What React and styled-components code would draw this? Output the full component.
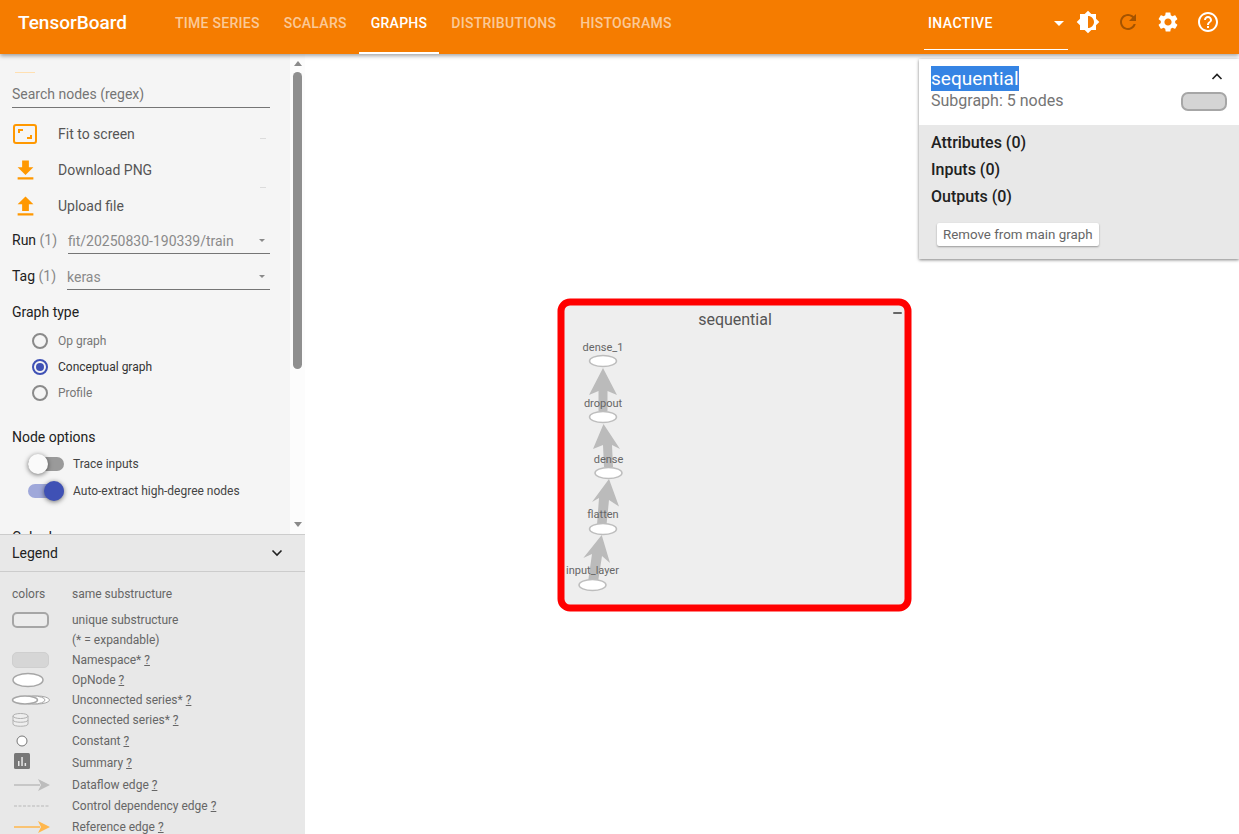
import React from 'react'
import styled, { createGlobalStyle } from 'styled-components'

const GlobalStyle = createGlobalStyle`
html, body {
  margin: 0;
  height: 100%;
  overflow: hidden;
  background: #fff;
  font-family: Roboto, "Noto Sans", sans-serif;
}
#root { height: 100%; }
* { box-sizing: border-box; }
`

const Page = styled.div`
  display: flex;
  flex-direction: column;
  height: 834px;
`

/* ---------- toolbar ---------- */

const Toolbar = styled.header`
  display: flex;
  align-items: stretch;
  flex: 0 0 54px;
  height: 54px;
  background: #f57c00;
  color: #fff;
  position: relative;
  z-index: 3;
  box-shadow: 0 2px 4px rgba(0, 0, 0, 0.35);
`

const Brand = styled.div`
  width: 163px;
  padding: 11px 0 0 18px;
  font-size: 19px;
  font-weight: 500;
  line-height: 24px;
`

const Tabs = styled.nav`
  display: flex;
  flex: 1;
`

const Tab = styled.div`
  padding: 15px 12px 0;
  height: 54px;
  font-size: 14px;
  font-weight: 500;
  line-height: 16px;
  letter-spacing: 0.27px;
  color: ${p => (p.$active ? '#fff' : 'rgba(255, 255, 255, 0.6)')};
  border-bottom: 2px solid ${p => (p.$active ? '#fff' : 'transparent')};
`

const InactiveSelect = styled.div`
  display: flex;
  justify-content: space-between;
  width: 144px;
  height: 50px;
  padding: 15px 4px 0 4px;
  font-size: 14px;
  font-weight: 500;
  line-height: 16px;
  letter-spacing: 0.4px;
  border-bottom: 1px solid #fff;
`

const Caret = styled.span`
  width: 0;
  height: 0;
  margin-top: 6px;
  border-left: ${p => p.$size || 5}px solid transparent;
  border-right: ${p => p.$size || 5}px solid transparent;
  border-top: ${p => p.$size || 5}px solid ${p => p.$color || '#fff'};
`

const ToolIcons = styled.div`
  display: flex;
  gap: 16px;
  padding: 10px 19px 0 8px;
`

const ToolIcon = styled.svg`
  width: 24px;
  height: 24px;
  fill: ${p => (p.$dim ? 'rgba(0, 0, 0, 0.33)' : '#fff')};
`

/* ---------- body ---------- */

const Body = styled.div`
  display: flex;
  flex: 1;
  min-height: 0;
`

const Side = styled.aside`
  display: flex;
  flex-direction: column;
  flex: 0 0 305px;
  width: 305px;
  min-height: 0;
`

const Controls = styled.div`
  display: flex;
  flex: 0 0 480px;
  height: 480px;
  overflow: hidden;
`

const ControlsInner = styled.div`
  flex: 0 0 290px;
  height: 480px;
  overflow: hidden;
  padding: 18px 20px 0 12px;
  background: #f5f5f5;
`

const Scrollbar = styled.div`
  display: flex;
  flex-direction: column;
  align-items: center;
  flex: 1;
  background: #fcfcfc;
  padding-top: 7px;
`

const ScrollUp = styled.span`
  width: 0;
  height: 0;
  border-left: 4px solid transparent;
  border-right: 4px solid transparent;
  border-bottom: 5px solid #8a8a8a;
`

const ScrollDown = styled.span`
  width: 0;
  height: 0;
  margin-top: 153px;
  border-left: 4px solid transparent;
  border-right: 4px solid transparent;
  border-top: 5px solid #8a8a8a;
`

const ScrollThumb = styled.div`
  width: 9px;
  height: 297px;
  margin-top: 6px;
  border-radius: 5px;
  background: #8f8f8f;
`

const FaintLine = styled.div`
  width: 20px;
  margin-left: 3px;
  height: 1px;
  background: #ffe0b2;
`

const Search = styled.div`
  height: 35px;
  margin-bottom: 8px;
  padding-top: 13px;
  font-size: 14px;
  line-height: 16px;
  color: #757575;
  border-bottom: 1px solid #757575;
`

const Action = styled.div`
  display: flex;
  align-items: center;
  height: 36px;
  font-size: 14px;
  color: #555;
`

const ActionIconBox = styled.div`
  display: flex;
  justify-content: center;
  width: 26px;
  margin-right: 20px;
`

const ActionIcon = styled.svg`
  width: 27px;
  height: 27px;
  flex: none;
  fill: #ff9800;
`

const ActionDash = styled.span`
  width: 6px;
  height: 1px;
  margin-left: auto;
  margin-right: 4px;
  margin-top: ${p => (p.$end ? '0' : '8px')};
  align-self: ${p => (p.$end ? 'flex-end' : 'center')};
  background: #dcdcdc;
`

const SelectRow = styled.div`
  display: flex;
  align-items: flex-start;
  height: 36px;
  font-size: 14px;
  line-height: 16px;
  margin-top: ${p => p.$top || 0}px;
`

const SelectLabel = styled.div`
  padding-top: 9px;
  color: #212121;
  width: ${p => p.$width}px;
  flex: none;
`

const Count = styled.span`
  color: #888;
`

const SelectBox = styled.div`
  display: flex;
  justify-content: space-between;
  flex: 1;
  height: 31px;
  padding: 10px 5px 0 0;
  color: #8a8a8a;
  border-bottom: 1px solid #757575;
`

const SectionTitle = styled.div`
  font-size: 14px;
  line-height: 16px;
  color: #212121;
  margin-top: ${p => p.$top}px;
`

const RadioList = styled.div`
  display: flex;
  flex-direction: column;
  padding: 8px 0 0 20px;
`

const RadioRow = styled.div`
  display: flex;
  align-items: center;
  height: 26px;
  font-size: 12px;
  color: ${p => (p.$on ? '#333' : '#777')};
`

const RadioDot = styled.span`
  position: relative;
  width: 16px;
  height: 16px;
  margin-right: 10px;
  border-radius: 50%;
  border: 2px solid ${p => (p.$on ? '#3f51b5' : '#8a8a8a')};

  &::after {
    content: '';
    display: ${p => (p.$on ? 'block' : 'none')};
    position: absolute;
    inset: 2px;
    border-radius: 50%;
    background: #3f51b5;
  }
`

const ToggleList = styled.div`
  display: flex;
  flex-direction: column;
  padding: 5px 0 0 16px;
`

const ToggleRow = styled.div`
  display: flex;
  align-items: center;
  height: 27px;
  font-size: 12px;
  color: #444;
`

const Toggle = styled.span`
  position: relative;
  width: 36px;
  height: 14px;
  margin-right: 9px;
  border-radius: 7px;
  background: ${p => (p.$on ? '#9fa8da' : '#9a9a9a')};

  &::after {
    content: '';
    position: absolute;
    top: -3px;
    left: ${p => (p.$on ? '16px' : '0')};
    width: 20px;
    height: 20px;
    border-radius: 50%;
    background: ${p => (p.$on ? '#3f51b5' : '#fafafa')};
    box-shadow: 0 1px 5px rgba(0, 0, 0, 0.55);
  }
`

/* ---------- legend ---------- */

const Legend = styled.section`
  flex: 1;
  overflow: hidden;
  background: #e8e8e8;
`

const LegendHead = styled.div`
  display: flex;
  align-items: center;
  justify-content: space-between;
  height: 38px;
  padding: 0 20px 0 12px;
  font-size: 14px;
  color: #212121;
  border-top: 1px solid #ccc;
  border-bottom: 1px solid #ccc;
`

const Chevron = styled.svg`
  width: 16px;
  height: 16px;
  fill: none;
  stroke: #212121;
  stroke-width: 1.6;
`

const LegendRows = styled.div`
  padding-top: 12px;
  font-size: 12px;
  color: #666;
`

const LegendRow = styled.div`
  display: flex;
  align-items: center;
  height: 20px;
  margin-top: ${p => p.$gap || 0}px;
  padding-left: 12px;
`

const LegendKey = styled.div`
  display: flex;
  align-items: center;
  width: 60px;
  flex: none;
`

const Help = styled.span`
  text-decoration: underline;
`

const UniqueBox = styled.span`
  width: 37px;
  height: 16px;
  border-radius: 5px;
  border: 2px solid #a6a6a6;
  background: #ececec;
`

const NamespaceBox = styled.span`
  width: 37px;
  height: 16px;
  border-radius: 5px;
  border: 1px solid #cfcfcf;
  background: #d6d6d6;
`

const KeySvg = styled.svg`
  display: block;
  overflow: visible;
  margin-top: ${p => p.$lift || 0}px;
`

/* ---------- main canvas ---------- */

const Canvas = styled.main`
  flex: 1;
  position: relative;
  background: #fff;
`

const GraphSvg = styled.svg`
  position: absolute;
  left: 252px;
  top: 244px;
  font-family: Roboto, sans-serif;
`

const InfoCard = styled.div`
  position: absolute;
  top: 5px;
  right: 0;
  width: 320px;
  height: 200px;
  box-shadow: 0 1px 3px rgba(0, 0, 0, 0.5);
`

const InfoHead = styled.div`
  position: relative;
  height: 66px;
  padding: 8px 12px 0;
  background: #fff;
`

const NodeName = styled.div`
  font-size: 19px;
  line-height: 24px;
`

const Selected = styled.span`
  padding: 1px 0;
  background: #3584e4;
  color: #fff;
`

const NodeSub = styled.div`
  font-size: 16px;
  line-height: 20px;
  color: #757575;
`

const CollapseBtn = styled(Chevron)`
  position: absolute;
  top: 10px;
  right: 14px;
`

const NodePill = styled.span`
  position: absolute;
  top: 33px;
  right: 12px;
  width: 46px;
  height: 19px;
  border-radius: 7px;
  border: 2px solid #a6a6a6;
  background: #d4d4d4;
`

const InfoBody = styled.div`
  height: 134px;
  padding: 4px 12px 0;
  background: #e8e8e8;
`

const InfoLine = styled.div`
  height: 27px;
  font-size: 16px;
  font-weight: 500;
  line-height: 27px;
  color: #212121;
`

const RemoveBtn = styled.div`
  display: inline-block;
  height: 23px;
  margin: 13px 0 0 6px;
  padding: 0 6px;
  font-size: 13.33px;
  line-height: 23px;
  color: #666;
  background: #fff;
  border-radius: 2px;
  box-shadow: 0 1px 2px rgba(0, 0, 0, 0.35);
`

const nodes = [
  { name: 'dense_1', x: 46, y: 63, ly: 53 },
  { name: 'dropout', x: 46, y: 119, ly: 109 },
  { name: 'dense', x: 51.5, y: 175, ly: 164.5 },
  { name: 'flatten', x: 46, y: 231, ly: 220 },
  { name: 'input_layer', x: 35.5, y: 287, ly: 276 },
]

const arrows = [
  'M46 70 L60 97 L50.5 93 L50.5 113 L41.5 113 L41.5 93 L32 97 Z',
  'M46.5 126 L63 151 L55 147 L56 169 L47 169 L46 147 L36 151 Z',
  'M52 181 L62 208.5 L52 202 L49.5 227 L40 227 L42 200 L35 204 Z',
  'M44.7 237 L53 265 L45 258 L41 284 L31 284 L35 256 L26.3 260 Z',
]

const ArrowIcon = ({ color, dashed }) => (
  <KeySvg width="38" height="14" viewBox="0 0 38 14">
    {dashed
      ? <path d="M2 7 H38" stroke={color} strokeWidth="1" strokeDasharray="3 1.5" fill="none" />
      : <path d="M2 7 H28" stroke={color} strokeWidth="1.5" fill="none" />}
    {!dashed && <path d="M26 1 L38 7 L26 13 L29 7 Z" fill={color} />}
  </KeySvg>
)

function App() {
  return (
    <Page>
      <GlobalStyle />
      <Toolbar>
        <Brand>TensorBoard</Brand>
        <Tabs>
          <Tab>TIME SERIES</Tab>
          <Tab>SCALARS</Tab>
          <Tab $active>GRAPHS</Tab>
          <Tab>DISTRIBUTIONS</Tab>
          <Tab>HISTOGRAMS</Tab>
        </Tabs>
        <InactiveSelect>
          INACTIVE
          <Caret />
        </InactiveSelect>
        <ToolIcons>
          <ToolIcon viewBox="0 0 24 24"><path d="M20 15.31L23.31 12 20 8.69V4h-4.69L12 .69 8.69 4H4v4.69L.69 12 4 15.31V20h4.69L12 23.31 15.31 20H20v-4.69zM12 18V6c3.31 0 6 2.69 6 6s-2.69 6-6 6z" /></ToolIcon>
          <ToolIcon $dim viewBox="0 0 24 24"><path d="M17.65 6.35C16.2 4.9 14.21 4 12 4c-4.42 0-7.99 3.58-7.99 8s3.57 8 7.99 8c3.73 0 6.84-2.55 7.73-6h-2.08c-.82 2.33-3.04 4-5.65 4-3.31 0-6-2.69-6-6s2.69-6 6-6c1.66 0 3.14.69 4.22 1.78L13 11h7V4l-2.35 2.35z" /></ToolIcon>
          <ToolIcon viewBox="0 0 24 24"><path d="M19.14 12.94c.04-.3.06-.61.06-.94 0-.32-.02-.64-.07-.94l2.03-1.58c.18-.14.23-.41.12-.61l-1.92-3.32c-.12-.22-.37-.29-.59-.22l-2.39.96c-.5-.38-1.03-.7-1.62-.94l-.36-2.54c-.04-.24-.24-.41-.48-.41h-3.84c-.24 0-.43.17-.47.41l-.36 2.54c-.59.24-1.13.57-1.62.94l-2.39-.96c-.22-.08-.47 0-.59.22L2.74 8.87c-.12.21-.08.47.12.61l2.03 1.58c-.05.3-.09.63-.09.94s.02.64.07.94l-2.03 1.58c-.18.14-.23.41-.12.61l1.92 3.32c.12.22.37.29.59.22l2.39-.96c.5.38 1.03.7 1.62.94l.36 2.54c.05.24.24.41.48.41h3.84c.24 0 .44-.17.47-.41l.36-2.54c.59-.24 1.13-.56 1.62-.94l2.39.96c.22.08.47 0 .59-.22l1.92-3.32c.12-.22.07-.47-.12-.61l-2.01-1.58zM12 15.6c-1.98 0-3.6-1.62-3.6-3.6s1.62-3.6 3.6-3.6 3.6 1.62 3.6 3.6-1.62 3.6-3.6 3.6z" /></ToolIcon>
          <ToolIcon viewBox="0 0 24 24"><path d="M11 18h2v-2h-2v2zm1-16C6.48 2 2 6.48 2 12s4.48 10 10 10 10-4.48 10-10S17.52 2 12 2zm0 18c-4.41 0-8-3.59-8-8s3.59-8 8-8 8 3.59 8 8-3.59 8-8 8zm0-14c-2.21 0-4 1.79-4 4h2c0-1.1.9-2 2-2s2 .9 2 2c0 2-3 1.75-3 5h2c0-2.25 3-2.5 3-5 0-2.21-1.79-4-4-4z" /></ToolIcon>
        </ToolIcons>
      </Toolbar>

      <Body>
        <Side>
          <Controls>
            <ControlsInner>
              <FaintLine />
              <Search>Search nodes (regex)</Search>
              <Action>
                <ActionIconBox>
                  <KeySvg width="24" height="20" viewBox="0 0 24 20">
                    <rect x="1" y="1" width="22" height="18" rx="2" fill="none" stroke="#ff9800" strokeWidth="2" />
                    <path d="M5 9 V5 H10 V7 H7 V9 Z M19 11 V15 H14 V13 H17 V11 Z" fill="#ff9800" />
                  </KeySvg>
                </ActionIconBox>
                Fit to screen
                <ActionDash />
              </Action>
              <Action>
                <ActionIconBox>
                  <ActionIcon viewBox="0 0 24 24"><path d="M19 9h-4V3H9v6H5l7 7 7-7zM5 18v2h14v-2H5z" /></ActionIcon>
                </ActionIconBox>
                Download PNG
                <ActionDash $end />
              </Action>
              <Action>
                <ActionIconBox>
                  <ActionIcon viewBox="0 0 24 24"><path d="M5 20h14v-2H5v2zm0-10h4v6h6v-6h4l-7-7-7 7z" /></ActionIcon>
                </ActionIconBox>
                Upload file
              </Action>
              <SelectRow $top={-1}>
                <SelectLabel $width={56}>Run <Count>(1)</Count></SelectLabel>
                <SelectBox>fit/20250830-190339/train<Caret $size={3} $color="#8a8a8a" /></SelectBox>
              </SelectRow>
              <SelectRow>
                <SelectLabel $width={55}>Tag <Count>(1)</Count></SelectLabel>
                <SelectBox>keras<Caret $size={3} $color="#8a8a8a" /></SelectBox>
              </SelectRow>
              <SectionTitle $top={9}>Graph type</SectionTitle>
              <RadioList>
                <RadioRow><RadioDot />Op graph</RadioRow>
                <RadioRow $on><RadioDot $on />Conceptual graph</RadioRow>
                <RadioRow><RadioDot />Profile</RadioRow>
              </RadioList>
              <SectionTitle $top={23}>Node options</SectionTitle>
              <ToggleList>
                <ToggleRow><Toggle />Trace inputs</ToggleRow>
                <ToggleRow><Toggle $on />Auto-extract high-degree nodes</ToggleRow>
              </ToggleList>
              <SectionTitle $top={25}>Color by</SectionTitle>
            </ControlsInner>
            <Scrollbar>
              <ScrollUp />
              <ScrollThumb />
              <ScrollDown />
            </Scrollbar>
          </Controls>

          <Legend>
            <LegendHead>
              Legend
              <Chevron viewBox="0 0 16 16"><path d="M3.5 5.5 L8 10 L12.5 5.5" /></Chevron>
            </LegendHead>
            <LegendRows>
              <LegendRow><LegendKey>colors</LegendKey>same substructure</LegendRow>
              <LegendRow $gap={6}><LegendKey><UniqueBox /></LegendKey>unique substructure</LegendRow>
              <LegendRow><LegendKey />(* = expandable)</LegendRow>
              <LegendRow><LegendKey><NamespaceBox /></LegendKey><span>Namespace* <Help>?</Help></span></LegendRow>
              <LegendRow><LegendKey>
                <KeySvg width="32" height="15" viewBox="0 0 32 15"><ellipse cx="16" cy="7" rx="15" ry="6.5" fill="#fff" stroke="#a6a6a6" strokeWidth="1.5" /></KeySvg>
              </LegendKey><span>OpNode <Help>?</Help></span></LegendRow>
              <LegendRow><LegendKey>
                <KeySvg width="38" height="12" viewBox="0 0 38 12">
                  <ellipse cx="25" cy="6" rx="12.5" ry="4" fill="#fff" stroke="#a6a6a6" />
                  <ellipse cx="21" cy="6" rx="12" ry="4" fill="#fff" stroke="#a6a6a6" />
                  <ellipse cx="13" cy="6" rx="12.5" ry="4" fill="#fff" stroke="#a6a6a6" strokeWidth="1.5" />
                </KeySvg>
              </LegendKey><span>Unconnected series* <Help>?</Help></span></LegendRow>
              <LegendRow><LegendKey>
                <KeySvg width="17" height="14" viewBox="0 0 17 14">
                  <path d="M1 3 V11 C1 14 16 14 16 11 V3" fill="#eee" stroke="#b0b0b0" />
                  <path d="M1 7 C1 10 16 10 16 7" fill="none" stroke="#b0b0b0" />
                  <ellipse cx="8.5" cy="3" rx="7.5" ry="2.5" fill="#eee" stroke="#b0b0b0" />
                </KeySvg>
              </LegendKey><span>Connected series* <Help>?</Help></span></LegendRow>
              <LegendRow $gap={1}><LegendKey>
                <KeySvg width="20" height="12" viewBox="0 0 20 12"><circle cx="10" cy="6" r="5" fill="#fff" stroke="#777" /></KeySvg>
              </LegendKey><span>Constant <Help>?</Help></span></LegendRow>
              <LegendRow $gap={2}><LegendKey>
                <KeySvg $lift={-4} width="20" height="16" viewBox="0 0 20 16">
                  <rect x="2" y="0" width="16" height="16" rx="1.5" fill="#777" />
                  <path d="M6 8h1.5v5H6zM9.3 4h1.5v9H9.3zM12.6 10h1.5v3h-1.5z" fill="#e8e8e8" />
                </KeySvg>
              </LegendKey><span>Summary <Help>?</Help></span></LegendRow>
              <LegendRow $gap={2}><LegendKey><ArrowIcon color="#bdbdbd" /></LegendKey><span>Dataflow edge <Help>?</Help></span></LegendRow>
              <LegendRow $gap={1}><LegendKey><ArrowIcon color="#b8b8b8" dashed /></LegendKey><span>Control dependency edge <Help>?</Help></span></LegendRow>
              <LegendRow $gap={1}><LegendKey><ArrowIcon color="#ffb74d" /></LegendKey><span>Reference edge <Help>?</Help></span></LegendRow>
            </LegendRows>
          </Legend>
        </Side>

        <Canvas>
          <GraphSvg width="360" height="318" viewBox="0 0 360 318">
            <rect x="4" y="4" width="347" height="306" rx="9" fill="#eee" stroke="#f00" strokeWidth="7" />
            <text x="178" y="27" textAnchor="middle" fontSize="16" fill="#555">sequential</text>
            <rect x="336" y="14" width="9" height="2" rx="1" fill="#666" />
            {arrows.map((d, i) => <path key={i} d={d} fill="#bbb" />)}
            {nodes.map(n => (
              <g key={n.name}>
                <ellipse cx={n.x} cy={n.y} rx="13.5" ry="5.5" fill="#fff" stroke="#bdbdbd" strokeWidth="1.5" />
                <text x={n.x} y={n.ly} textAnchor="middle" fontSize="11" fill="#666">{n.name}</text>
              </g>
            ))}
          </GraphSvg>
          <InfoCard>
            <InfoHead>
              <NodeName><Selected>sequential</Selected></NodeName>
              <NodeSub>Subgraph: 5 nodes</NodeSub>
              <CollapseBtn viewBox="0 0 16 16"><path d="M3.5 10 L8 5.5 L12.5 10" /></CollapseBtn>
              <NodePill />
            </InfoHead>
            <InfoBody>
              <InfoLine>Attributes (0)</InfoLine>
              <InfoLine>Inputs (0)</InfoLine>
              <InfoLine>Outputs (0)</InfoLine>
              <RemoveBtn>Remove from main graph</RemoveBtn>
            </InfoBody>
          </InfoCard>
        </Canvas>
      </Body>
    </Page>
  )
}

export default App
